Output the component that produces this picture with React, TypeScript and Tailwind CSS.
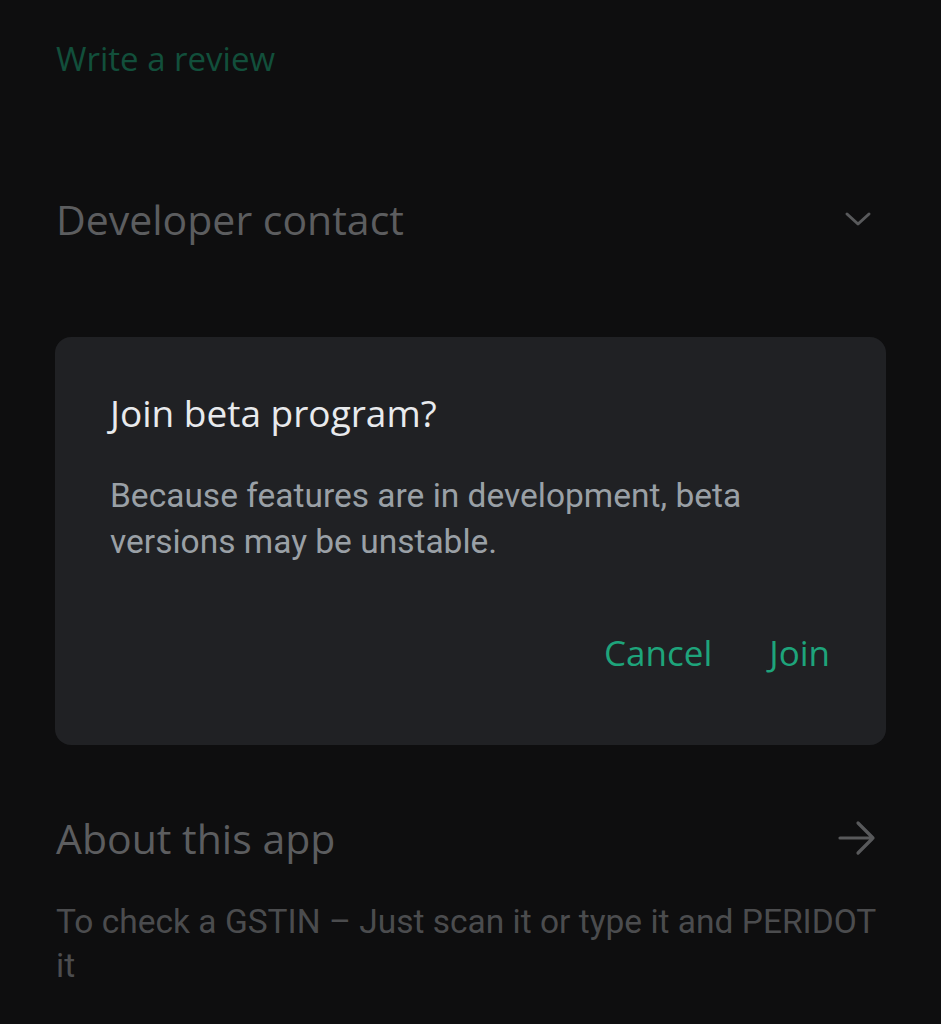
export default function App() {
  return (
    <div className="w-[941px] h-[1024px] overflow-hidden bg-[#0e0e0f] px-[56px] font-['Open_Sans',sans-serif]">
      <div className="pt-[35px] text-[33px] leading-[48px] font-medium text-[#124f3b]">
        Write a review
      </div>

      <div className="mt-[106px] flex items-center justify-between h-[60px]">
        <div className="text-[41px] leading-[60px] text-[#5c5d5f]">Developer contact</div>
        <svg className="mr-[13px]" width="28" height="18" viewBox="0 0 28 18" fill="none">
          <path d="M3 4 L14 14 L25 4" stroke="#58595b" strokeWidth="3" strokeLinecap="round" strokeLinejoin="round" />
        </svg>
      </div>

      <div className="mt-[88px] -mx-px rounded-[16px] bg-[#202124] h-[408px] pl-[55px] pr-[56px] pt-[56px]">
        <div className="text-[37px] leading-[40px] font-medium text-[#e8eaed]">
          Join beta program?
        </div>
        <div className="mt-[40px] font-['Roboto',sans-serif] text-[33.5px] leading-[46px] text-[#9aa0a6]">
          Because features are in development, beta
          <br />
          versions may be unstable.
        </div>
        <div className="mt-[68px] flex justify-end gap-[57px] text-[35px] leading-[40px] font-medium text-[#1ea47b]">
          <span>Cancel</span>
          <span>Join</span>
        </div>
      </div>

      <div className="mt-[63px] flex items-center justify-between h-[60px]">
        <div className="text-[41px] leading-[60px] text-[#5c5d5f]">About this app</div>
        <svg className="mr-[8px]" width="40" height="36" viewBox="0 0 40 36" fill="none">
          <path d="M3 18 H36 M21 3 L36 18 L21 33" stroke="#58595b" strokeWidth="3.2" strokeLinecap="round" strokeLinejoin="round" />
        </svg>
      </div>

      <div className="mt-[32px] w-[820px] font-['Roboto',sans-serif] text-[33.5px] leading-[44px] text-[#4b4c4e]">
        To check a GSTIN – Just scan it or type it and PERIDOT it
      </div>
    </div>
  );
}
